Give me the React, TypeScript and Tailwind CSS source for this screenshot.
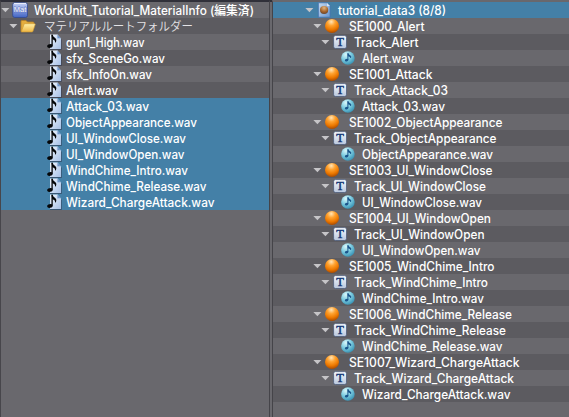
import React from "react";

type Kind = "unit" | "folder" | "file" | "sheet" | "cue" | "track" | "wave";

const layout: Record<Kind, { row: string; icon: string; arrow: boolean }> = {
  unit: { row: "pl-0", icon: "ml-[2px] mr-[6px]", arrow: true },
  folder: { row: "pl-[8px]", icon: "ml-[2px] mr-[8px]", arrow: true },
  file: { row: "pl-[45px]", icon: "mr-[4px]", arrow: false },
  sheet: { row: "pl-[32px]", icon: "ml-[2px] mr-[6px]", arrow: true },
  cue: { row: "pl-[40px]", icon: "ml-[2px] mr-[9px]", arrow: true },
  track: { row: "pl-[48px]", icon: "ml-[2px] mr-[6px]", arrow: true },
  wave: { row: "pl-[67px]", icon: "mr-[6px]", arrow: false },
};

function Icon({ kind }: { kind: Kind }) {
  return (
    <svg width="16" height="16" viewBox="0 0 16 16" className="block">
      {kind === "unit" && (
        <>
          <rect x="0.7" y="0.7" width="14.8" height="14.8" rx="2" fill="url(#unitFill)" stroke="#30478e" strokeWidth="0.8" />
          <path d="M2 1.5h12" stroke="#e9edfa" strokeWidth="1" />
          <text x="8" y="10" textAnchor="middle" fontSize="7.5" fontFamily="Liberation Sans, sans-serif" fill="#fff" stroke="#5f76bf" strokeWidth="0.8" paintOrder="stroke">Mat</text>
        </>
      )}
      {kind === "folder" && (
        <>
          <path d="M1 13.5V3.5q0-1 1-1h4l1.5 1.5H13q1 0 1 1v3" fill="#e4ad3e" stroke="#b98125" strokeWidth="0.8" />
          <path d="M1.2 14 4 6.5q.3-.8 1.1-.8h9.5q.9 0 .6.9L13 13.2q-.3.8-1.1.8z" fill="url(#folderFill)" stroke="#c99531" strokeWidth="0.6" />
        </>
      )}
      {kind === "file" && (
        <>
          <path d="M4.5 2h8l3.3 4v10H4z" fill="#303b50" opacity="0.6" />
          <path d="M4 .5h7.4L15 4.4V15H4z" fill="url(#paper)" />
          <path d="M11.2.5v4.1H15" fill="#6e94c8" stroke="#c5d6ef" strokeWidth="0.5" />
          <path d="M6.1.8v11" stroke="#050608" strokeWidth="1.3" />
          <path d="M5.5.8h1.2q.3 1.8 2.2 3 2.4 1.8.8 4.7h-.6q.2-2.6-2.8-3.2z" fill="#050608" />
          <ellipse cx="3.9" cy="12" rx="2.8" ry="1.9" transform="rotate(-12 3.9 12)" fill="#050608" />
        </>
      )}
      {kind === "sheet" && (
        <>
          <path d="M2.4.8h8.7l3 3.2v11.2H2.4z" fill="url(#sheetFill)" stroke="#416fae" strokeWidth="0.7" />
          <path d="M11 1v3h3" fill="#d7e6f7" />
          <circle cx="8.1" cy="8" r="4.1" fill="url(#bronze)" />
        </>
      )}
      {kind === "cue" && <circle cx="8" cy="8" r="7" fill="url(#orb)" />}
      {kind === "track" && (
        <>
          <rect x="1.6" y="1.6" width="12.9" height="12.9" rx="1.8" fill="url(#tile)" stroke="#455474" strokeWidth="0.7" />
          <text x="8" y="12.2" textAnchor="middle" fontSize="12.5" fontWeight="400" fontFamily="Liberation Serif, serif" fill="#123574" stroke="#123574" strokeWidth="0.45">T</text>
        </>
      )}
      {kind === "wave" && (
        <>
          <circle cx="7.9" cy="8" r="6.8" fill="url(#aqua)" />
          <path d="M7.9 3.3v6.7" stroke="#1b568c" strokeWidth="1" />
          <path d="M7.5 3.3h.9q.5 1.4 2.1 2.1 1.5 1 .4 2.7h-.5q.1-1.3-2.5-1.8z" fill="#1b568c" />
          <ellipse cx="6.6" cy="10.2" rx="1.8" ry="1.3" transform="rotate(-12 6.6 10.2)" fill="#1b568c" />
        </>
      )}
    </svg>
  );
}

function Row({ kind, label, width, selected, light }: { kind: Kind; label: string; width: number; selected?: boolean; light: boolean }) {
  const place = layout[kind];
  const folder = kind === "folder";
  return (
    <div className={`flex h-4 shrink-0 items-center ${place.row} ${selected ? "bg-[#4480a7]" : light ? "bg-[#69686d]" : "bg-[#5c5b60]"}`}>
      {place.arrow && (
        <svg width="9" height="16" viewBox="0 0 9 16" className="block shrink-0">
          <path d="M.4 6h8l-4 4.3z" fill="#c6c5c8" />
        </svg>
      )}
      <span className={`shrink-0 ${place.icon}`}><Icon kind={kind} /></span>
      <svg width={width} height="16" className="block shrink-0 overflow-visible">
        <text x="0" y="12.5" textLength={width} lengthAdjust="spacingAndGlyphs" fontSize={folder ? 12 : 12.5} fontWeight={folder ? 350 : 500} fill={folder ? "#e4e3e6" : "#fff"} fontFamily={folder ? "'Noto Sans CJK JP', sans-serif" : "Inter, 'Noto Sans CJK JP', sans-serif"}>{label}</text>
      </svg>
    </div>
  );
}

const files: [string, number][] = [
  ["gun1_High.wav", 78.5],
  ["sfx_SceneGo.wav", 99],
  ["sfx_InfoOn.wav", 86],
  ["Alert.wav", 52],
  ["Attack_03.wav", 83],
  ["ObjectAppearance.wav", 131],
  ["UI_WindowClose.wav", 120],
  ["UI_WindowOpen.wav", 118.5],
  ["WindChime_Intro.wav", 122],
  ["WindChime_Release.wav", 140.5],
  ["Wizard_ChargeAttack.wav", 148.5],
];

const cues: { kind: Kind; label: string; width: number }[] = [
  { kind: "cue", label: "SE1000_Alert", width: 75.5 },
  { kind: "track", label: "Track_Alert", width: 64.5 },
  { kind: "wave", label: "Alert.wav", width: 52 },
  { kind: "cue", label: "SE1001_Attack", width: 83.5 },
  { kind: "track", label: "Track_Attack_03", width: 94 },
  { kind: "wave", label: "Attack_03.wav", width: 83 },
  { kind: "cue", label: "SE1002_ObjectAppearance", width: 153.5 },
  { kind: "track", label: "Track_ObjectAppearance", width: 142.5 },
  { kind: "wave", label: "ObjectAppearance.wav", width: 131 },
  { kind: "cue", label: "SE1003_UI_WindowClose", width: 143.5 },
  { kind: "track", label: "Track_UI_WindowClose", width: 132 },
  { kind: "wave", label: "UI_WindowClose.wav", width: 120 },
  { kind: "cue", label: "SE1004_UI_WindowOpen", width: 142 },
  { kind: "track", label: "Track_UI_WindowOpen", width: 130.5 },
  { kind: "wave", label: "UI_WindowOpen.wav", width: 118.5 },
  { kind: "cue", label: "SE1005_WindChime_Intro", width: 145.5 },
  { kind: "track", label: "Track_WindChime_Intro", width: 134 },
  { kind: "wave", label: "WindChime_Intro.wav", width: 122 },
  { kind: "cue", label: "SE1006_WindChime_Release", width: 163 },
  { kind: "track", label: "Track_WindChime_Release", width: 152 },
  { kind: "wave", label: "WindChime_Release.wav", width: 140.5 },
  { kind: "cue", label: "SE1007_Wizard_ChargeAttack", width: 170.5 },
  { kind: "track", label: "Track_Wizard_ChargeAttack", width: 160 },
  { kind: "wave", label: "Wizard_ChargeAttack.wav", width: 148.5 },
];

export default function App() {
  return (
    <div className="flex h-[417px] w-[569px] overflow-hidden bg-[#69686d]">
      <svg width="0" height="0" className="absolute">
        <defs>
          <linearGradient id="unitFill" x2="0" y2="1"><stop stopColor="#c8d3f6" /><stop offset=".5" stopColor="#849be0" /><stop offset="1" stopColor="#4164c3" /></linearGradient>
          <linearGradient id="folderFill" x2="0" y2="1"><stop stopColor="#fff0a9" /><stop offset="1" stopColor="#eeb643" /></linearGradient>
          <linearGradient id="paper" x2="1" y2="1"><stop stopColor="#f1f6fd" /><stop offset="1" stopColor="#a6c0e6" /></linearGradient>
          <linearGradient id="sheetFill" x2="1" y2="1"><stop stopColor="#c6d9ef" /><stop offset="1" stopColor="#6896d0" /></linearGradient>
          <radialGradient id="bronze" cx=".5" cy=".25" r=".75"><stop stopColor="#e2b782" /><stop offset=".6" stopColor="#a7652b" /><stop offset="1" stopColor="#65432e" /></radialGradient>
          <radialGradient id="orb" cx=".45" cy=".2" r=".8"><stop stopColor="#ffe5b8" /><stop offset=".35" stopColor="#ffa331" /><stop offset=".7" stopColor="#ed7900" /><stop offset="1" stopColor="#a94b00" /></radialGradient>
          <linearGradient id="tile" x2="0" y2="1"><stop stopColor="#f5f8fd" /><stop offset="1" stopColor="#b8c7de" /></linearGradient>
          <radialGradient id="aqua" cx=".35" cy=".25" r=".8"><stop stopColor="#d8f7fb" /><stop offset=".5" stopColor="#7ccbe0" /><stop offset="1" stopColor="#3590b2" /></radialGradient>
        </defs>
      </svg>
      <section className="flex w-[270px] shrink-0 flex-col border-l border-r border-t-2 border-l-[#47464b] border-r-[#454449] border-t-[#303039]">
        <Row kind="unit" label="WorkUnit_Tutorial_MaterialInfo (編集済)" width={220} light />
        <Row kind="folder" label="マテリアルルートフォルダー" width={149} light={false} />
        {files.map(([label, width], i) => <Row key={label} kind="file" label={label} width={width} selected={i >= 4} light={i % 2 === 0} />)}
      </section>
      <div className="w-[2px] shrink-0 border-t-2 border-[#303039] bg-[#69686d]" />
      <section className="flex min-w-0 flex-1 flex-col border-l border-t-2 border-l-[#454449] border-t-[#69686d]">
        <Row kind="sheet" label="tutorial_data3 (8/8)" width={108} selected light />
        {cues.map((cue, i) => <Row key={cue.label + i} {...cue} light={i % 2 === 0} />)}
      </section>
    </div>
  );
}
